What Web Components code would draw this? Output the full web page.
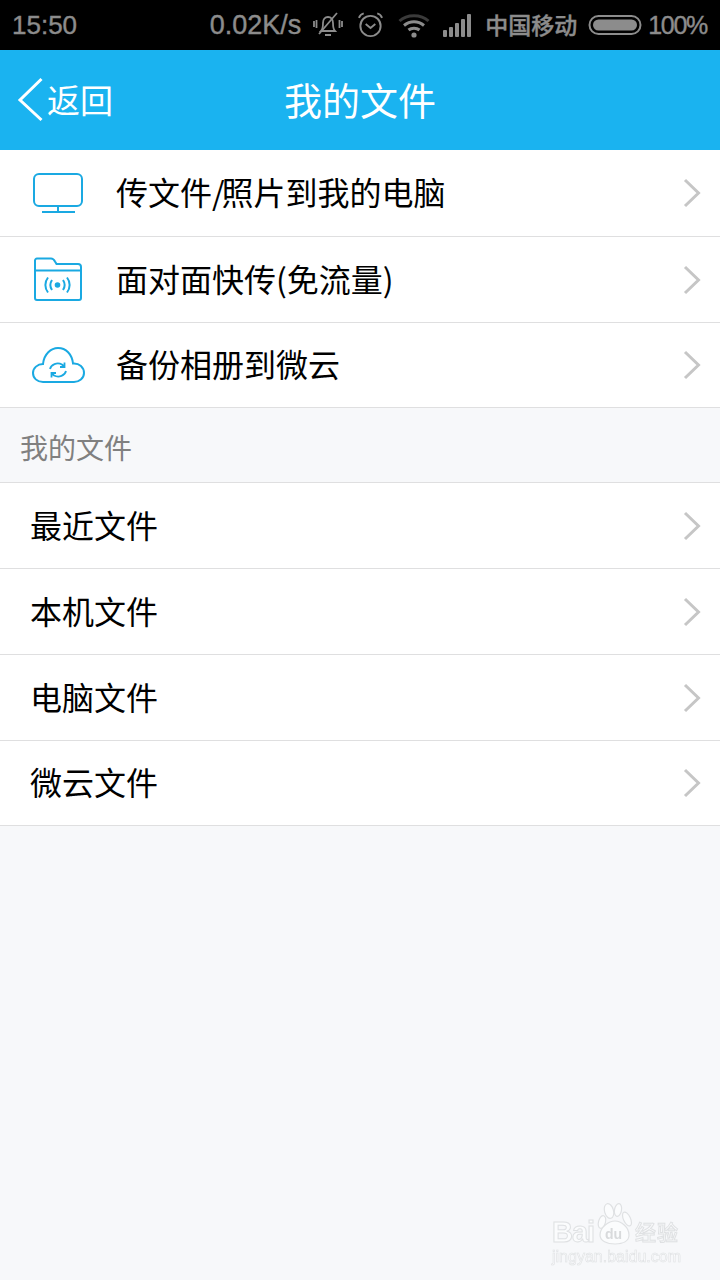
<!DOCTYPE html>
<html>
<head>
<meta charset="utf-8">
<style>
  html, body { margin: 0; padding: 0; }
  body {
    width: 720px;
    height: 1280px;
    overflow: hidden;
    background: #f7f8fa;
    font-family: "Noto Sans CJK SC", "Noto Sans", sans-serif;
  }
</style>
</head>
<body>
<status-bar></status-bar>
<app-header></app-header>

<file-list>
  <file-row indent>
    <svg slot="icon" width="56" height="46" viewBox="0 0 56 46" fill="none" stroke="#1aa9e2" stroke-width="2">
      <rect x="3" y="4" width="48" height="32" rx="5"/>
      <path d="M27 36v6M11 42h33"/>
    </svg>
    传文件<span style="letter-spacing:-3px">/</span>照片到我的电脑
  </file-row>
  <file-row indent>
    <svg slot="icon" width="56" height="46" viewBox="0 0 56 46" fill="none" stroke="#1aa9e2" stroke-width="2">
      <path d="M4 14V3.500a2 2 0 0 1 2-2h14c2 0 3 1 4 3l1.500 2.500H47a3 3 0 0 1 3 3v31a2 2 0 0 1-2 2H6a2 2 0 0 1-2-2z"/>
      <path d="M4 13.500h46"/>
      <circle cx="26.500" cy="28" r="2.800" fill="#1aa9e2" stroke="none"/>
      <path d="M21 23c-2 3-2 7 0 10M32 23c2 3 2 7 0 10M17 20.500c-3.500 4.500-3.500 10.500 0 15M36 20.500c3.500 4.500 3.500 10.500 0 15"/>
    </svg>
    面对面快传(免流量)
  </file-row>
  <file-row indent>
    <svg slot="icon" width="56" height="46" viewBox="0 0 56 46" fill="none" stroke="#1aa9e2" stroke-width="2">
      <path d="M12 40c-6 0-10-4-10-9 0-5 4.500-9 10-9C13 12 20 6 27 6c8 0 14 6 15 15.500 6.500-.500 11 4 11 9.500S48 40 43 40z"/>
      <path d="M19 27c1-4.500 7-7 12-4.500l2 2M33.500 20.500v4.500H29M35 29c-1 4.500-7 7-12 4.500l-2-2M20.500 35.500V31H25" stroke-width="1.800"/>
    </svg>
    备份相册到微云
  </file-row>
</file-list>

<section-label>我的文件</section-label>

<file-list>
  <file-row>最近文件</file-row>
  <file-row>本机文件</file-row>
  <file-row>电脑文件</file-row>
  <file-row>微云文件</file-row>
</file-list>

<baidu-mark></baidu-mark>

<script>
class StatusBar extends HTMLElement {
  constructor() {
    super();
    this.shadowDOM = this.attachShadow({mode: "open"});
    this.shadowDOM.innerHTML = `
    <style>
      :host {
        display: flex;
        align-items: center;
        height: 50px;
        padding: 0 12px;
        box-sizing: border-box;
        background: #000;
        color: #8c8c8c;
        font: 26px "Liberation Sans", Arial, sans-serif;
        -webkit-text-stroke: .4px #8c8c8c;
      }
      .time { flex: 1; }
      .speed { margin-right: 12px; font-size: 27px; }
      .pct { font-size: 25px; letter-spacing: -1.300px; margin-right: 1px; }
      .cn { font: 500 23px "Noto Sans CJK SC", sans-serif; margin: 0 11px 0 14px; position: relative; top: -1px; }
      svg { display: block; flex: none; }
      .bell { margin-right: 14px; }
      .alarm { margin-right: 14px; }
      .wifi { margin-right: 13px; }
    </style>
    <span class="time">15:50</span>
    <span class="speed">0.02K/s</span>
    <svg class="bell" width="30" height="28" viewBox="0 0 30 28" fill="none" stroke="#8c8c8c" stroke-width="1.800">
      <path d="M8 20c2-2 2-4 2-8 0-3.500 2-6 5-6s5 2.500 5 6c0 4 0 6 2 8z"/>
      <path d="M12 24h6M6 23L24 2M1 10v6M3.500 9v8M26.500 9v8M29 10v6"/>
    </svg>
    <svg class="alarm" width="27" height="28" viewBox="0 0 28 28" fill="none" stroke="#8c8c8c" stroke-width="2">
      <circle cx="14" cy="15" r="10.500"/>
      <path d="M9 13l5 4 5-4M2 6.500C3 4 5 2.500 7 2M26 6.500C25 4 23 2.500 21 2"/>
    </svg>
    <svg class="wifi" width="32" height="26" viewBox="0 0 32 26" fill="none" stroke="#8c8c8c" stroke-width="3">
      <path d="M1.500 9C9 2 23 2 30.500 9" stroke="#3a3a3a"/>
      <path d="M6 13.500c6-5 14-5 20 0M10.500 18c3-2.500 8-2.500 11 0"/>
      <circle cx="16" cy="23" r="2.600" fill="#8c8c8c" stroke="none"/>
    </svg>
    <svg width="28" height="24" viewBox="0 0 28 24" fill="#8c8c8c">
      <rect x="0" y="17" width="4" height="7" rx="1"/>
      <rect x="6" y="14" width="4" height="10" rx="1"/>
      <rect x="12" y="10" width="4" height="14" rx="1"/>
      <rect x="18" y="6" width="4" height="18" rx="1"/>
      <rect x="24" y="1" width="4" height="23" rx="1"/>
    </svg>
    <span class="cn">中国移动</span>
    <svg width="54" height="22" viewBox="0 0 54 22" style="margin-right:6px">
      <rect x="1.500" y="2" width="51" height="18" rx="9" fill="none" stroke="#8c8c8c" stroke-width="2"/>
      <rect x="5" y="5.500" width="44" height="11" rx="5.500" fill="#8c8c8c"/>
    </svg>
    <span class="pct">100%</span>`;
  }
}
customElements.define("status-bar", StatusBar);

class AppHeader extends HTMLElement {
  constructor() {
    super();
    this.shadowDOM = this.attachShadow({mode: "open"});
    this.shadowDOM.innerHTML = `
    <style>
      :host {
        display: grid;
        grid-template-columns: 1fr auto 1fr;
        align-items: center;
        height: 100px;
        background: #1ab3f0;
        color: #fff;
      }
      .back {
        display: flex;
        align-items: center;
        padding-left: 17px;
        font-size: 33px;
        gap: 3px;
      }
      .back span { padding-bottom: 2px; }
      .title { font-size: 38px; padding-bottom: 4px; }
    </style>
    <div class="back">
      <svg width="27" height="46" viewBox="0 0 27 46" fill="none" stroke="#fff" stroke-width="3"><path d="M24.500 2L3 23l21.500 20"/></svg>
      <span>返回</span>
    </div>
    <div class="title">我的文件</div>
    <div></div>`;
  }
}
customElements.define("app-header", AppHeader);

class FileList extends HTMLElement {
  constructor() {
    super();
    this.shadowDOM = this.attachShadow({mode: "open"});
    this.shadowDOM.innerHTML = `
    <style>
      :host { display: block; background: #fff; }
    </style>
    <slot></slot>`;
  }
}
customElements.define("file-list", FileList);

class FileRow extends HTMLElement {
  constructor() {
    super();
    this.shadowDOM = this.attachShadow({mode: "open"});
    this.shadowDOM.innerHTML = `
    <style>
      :host {
        display: flex;
        align-items: center;
        height: 86px;
        box-sizing: border-box;
        padding: 0 19px 0 30px;
        border-bottom: 1px solid #dfdfe0;
        color: #000;
        font-size: 32px;
      }
      :host(:last-child) { height: 85px; }
      :host([indent]:first-child) { height: 87px; }
      :host([indent]) { padding-left: 0; }
      .icon { display: none; }
      :host([indent]) .icon {
        display: block;
        width: 116px;
        padding-left: 31px;
        box-sizing: border-box;
      }
      ::slotted(svg) { display: block; overflow: visible; }
      .label { flex: 1; padding-bottom: 4px; }
      .arrow { display: block; }
    </style>
    <div class="icon"><slot name="icon"></slot></div>
    <div class="label"><slot></slot></div>
    <svg class="arrow" width="18" height="30" viewBox="0 0 18 30" fill="none" stroke="#c6c6c6" stroke-width="3"><path d="M2 2l13.500 13L2 28"/></svg>`;
  }
}
customElements.define("file-row", FileRow);

class SectionLabel extends HTMLElement {
  constructor() {
    super();
    this.shadowDOM = this.attachShadow({mode: "open"});
    this.shadowDOM.innerHTML = `
    <style>
      :host {
        display: flex;
        align-items: center;
        height: 75px;
        box-sizing: border-box;
        padding: 4px 0 0 20px;
        border-bottom: 1px solid #dfdfe0;
        color: #808080;
        font-size: 28px;
      }
    </style>
    <slot></slot>`;
  }
}
customElements.define("section-label", SectionLabel);

// watermark lies over the empty page background
class BaiduMark extends HTMLElement {
  constructor() {
    super();
    this.shadowDOM = this.attachShadow({mode: "open"});
    this.shadowDOM.innerHTML = `
    <style>
      :host {
        position: absolute;
        left: 552px;
        top: 1200px;
        width: 130px;
        height: 66px;
        color: #fbfcfd;
        font-family: "Liberation Sans", Arial, sans-serif;
        filter: blur(.4px);
      }
      span { position: absolute; white-space: nowrap; line-height: 1; -webkit-text-stroke: 1px #dfe1e3; }
      .bai { left: 0; top: 18px; font-size: 29px; font-weight: bold; letter-spacing: -1px; }
      .du { left: 53px; top: 27px; font-size: 14px; font-weight: bold; z-index: 1; color: #d8dadc; -webkit-text-stroke: 0; }
      .jy { left: 83px; top: 21px; font: 500 21px/1 "Noto Sans CJK SC", sans-serif; letter-spacing: 1px; }
      .url { left: 0; top: 49px; font-size: 16px; -webkit-text-stroke: .6px #dfe1e3; }
      svg { position: absolute; left: 45px; top: 2px; }
    </style>
    <span class="bai">Bai</span>
    <svg width="36" height="44" viewBox="0 0 36 44" fill="#fbfcfd" stroke="#dfe1e3" stroke-width="1.200">
      <ellipse cx="12" cy="9" rx="4.500" ry="7.500" transform="rotate(-15 12 9)"/>
      <ellipse cx="21" cy="8" rx="3.500" ry="6.500" transform="rotate(10 21 8)"/>
      <ellipse cx="30" cy="17" rx="3.500" ry="7.500" transform="rotate(-25 30 17)"/>
      <ellipse cx="5" cy="20" rx="3.500" ry="6.500" transform="rotate(15 5 20)"/>
      <path d="M18 19c6 0 14 6 14 14 0 6-6 9-14 9S3 39 3 33c0-8 9-14 15-14z"/>
    </svg>
    <span class="du">du</span>
    <span class="jy">经验</span>
    <span class="url">jingyan.baidu.com</span>`;
  }
}
customElements.define("baidu-mark", BaiduMark);
</script>
</body>
</html>
